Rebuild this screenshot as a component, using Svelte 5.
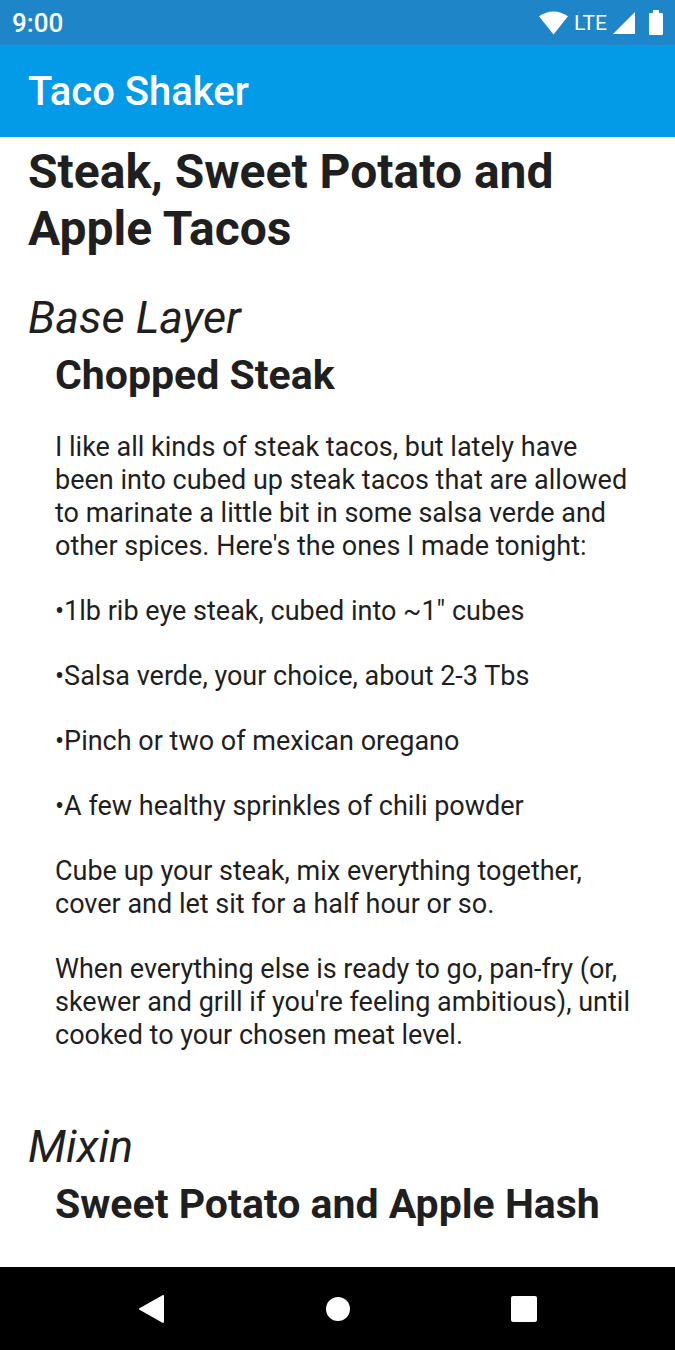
<script lang="ts">
interface Layer {
    kind: string;
    name: string;
    body: string[];
}

const title = 'Steak, Sweet Potato and Apple Tacos';

const layers: Layer[] = [
    {
        kind: 'Base Layer',
        name: 'Chopped Steak',
        body: [
            "I like all kinds of steak tacos, but lately have been into cubed up steak tacos that are allowed to marinate a little bit in some salsa verde and other spices. Here's the ones I made tonight:",
            '•1lb rib eye steak, cubed into ~1" cubes',
            '•Salsa verde, your choice, about 2-3 Tbs',
            '•Pinch or two of mexican oregano',
            '•A few healthy sprinkles of chili powder',
            'Cube up your steak, mix everything together, cover and let sit for a half hour or so.',
            "When everything else is ready to go, pan-fry (or, skewer and grill if you're feeling ambitious), until cooked to your chosen meat level."
        ]
    },
    {
        kind: 'Mixin',
        name: 'Sweet Potato and Apple Hash',
        body: []
    }
];
</script>

<div class="screen">
    <div class="status-bar">
        <span class="clock">9:00</span>
        <div class="indicators">
            <svg class="wifi" viewBox="0 0 30 24" aria-hidden="true">
                <path d="M0 5Q15-5 30 5L15 24Z"/>
            </svg>
            <span class="network">LTE</span>
            <svg class="signal" viewBox="0 0 22 22" aria-hidden="true">
                <path d="M22 0V22H0Z"/>
            </svg>
            <svg class="battery" viewBox="0 0 14 25" aria-hidden="true">
                <path d="M4 0H10V3H13Q14 3 14 4V24Q14 25 13 25H1Q0 25 0 24V4Q0 3 1 3H4Z"/>
            </svg>
        </div>
    </div>

    <header class="app-bar">
        <span>Taco Shaker</span>
    </header>

    <main>
        <h1>{title}</h1>
        {#each layers as layer}
            <section>
                <h2>{layer.kind}</h2>
                <div class="layer">
                    <h3>{layer.name}</h3>
                    {#each layer.body as text}
                        <p>{text}</p>
                    {/each}
                </div>
            </section>
        {/each}
    </main>

    <nav class="nav-bar">
        <button aria-label="Back">
            <svg viewBox="0 0 28 28" aria-hidden="true">
                <path d="M25 1V27L2 14Z" stroke-width="2" stroke-linejoin="round"/>
            </svg>
        </button>
        <button aria-label="Home">
            <svg viewBox="0 0 28 28" aria-hidden="true">
                <circle cx="14" cy="14" r="12"/>
            </svg>
        </button>
        <button aria-label="Recent apps">
            <svg viewBox="0 0 28 28" aria-hidden="true">
                <rect x="1" y="1" width="26" height="26" rx="2"/>
            </svg>
        </button>
    </nav>
</div>

<style>
    :global(body) {
        margin: 0;
        background: #fff;
        font-family: Roboto, sans-serif;
        color: #1f1f1f;
    }

    .screen {
        display: flex;
        flex-direction: column;
        height: 100vh;
        overflow: hidden;
    }

    .status-bar {
        display: flex;
        align-items: center;
        justify-content: space-between;
        flex: none;
        height: 45px;
        padding: 0 12px;
        background: #1e86c8;
        color: #fff;
    }

    .clock {
        font-size: 26px;
        font-weight: 500;
    }

    .indicators {
        display: flex;
        align-items: center;
        gap: 6px;
    }

    .network {
        font-size: 21px;
    }

    svg {
        display: block;
        fill: #fff;
        stroke: #fff;
        stroke-width: 0;
    }

    .wifi {
        width: 29px;
        height: 24px;
    }

    .signal {
        width: 22px;
        height: 22px;
    }

    .battery {
        width: 14px;
        height: 25px;
        margin-left: 8px;
    }

    .app-bar {
        display: flex;
        align-items: center;
        flex: none;
        height: 92px;
        padding: 0 28px;
        background: #039be8;
        color: #fff;
        font-size: 40px;
        font-weight: 500;
    }

    main {
        flex: 1;
        min-height: 0;
        overflow: hidden;
        padding: 6px 28px 0;
    }

    h1,
    h2,
    h3,
    p {
        margin: 0;
    }

    h1 {
        font-size: 48px;
        line-height: 57px;
        font-weight: 700;
    }

    section {
        padding-top: 32px;
    }

    section + section {
        padding-top: 66px;
    }

    h2 {
        font-size: 45px;
        line-height: 57px;
        font-weight: 400;
        font-style: italic;
    }

    .layer {
        padding: 0 12px 0 27px;
    }

    h3 {
        padding-bottom: 27px;
        font-size: 41px;
        line-height: 58px;
        font-weight: 700;
    }

    p {
        font-size: 27px;
        line-height: 33px;
    }

    p + p {
        margin-top: 32px;
    }

    .nav-bar {
        display: flex;
        align-items: center;
        justify-content: center;
        flex: none;
        height: 83px;
        background: #000;
    }

    .nav-bar button {
        display: flex;
        justify-content: center;
        width: 186px;
        padding: 8px 0;
        border: 0;
        background: none;
    }

    .nav-bar svg {
        width: 28px;
        height: 28px;
    }
</style>
